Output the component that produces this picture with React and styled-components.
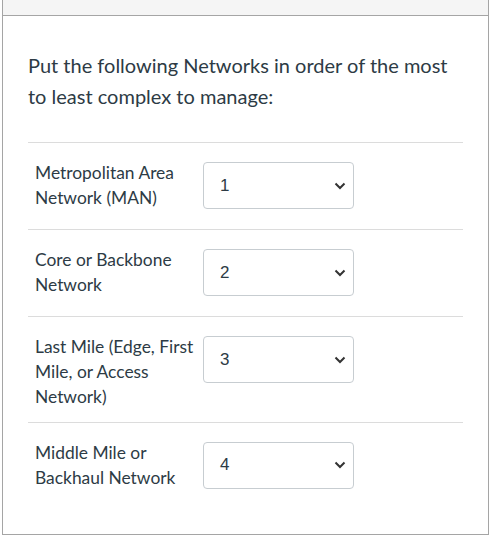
import React from "react";
import styled, { createGlobalStyle } from "styled-components";

const GlobalStyle = createGlobalStyle`
  body {
    margin: 0;
    background: #fff;
    font-family: Lato, "Liberation Sans", sans-serif;
    color: #2d3b45;
  }
`;

const items = [
  { label: "Metropolitan Area Network (MAN)", value: "1" },
  { label: "Core or Backbone Network", value: "2" },
  { label: "Last Mile (Edge, First Mile, or Access Network)", value: "3" },
  { label: "Middle Mile or Backhaul Network", value: "4" },
];

const App = () => {
  return (
    <>
      <GlobalStyle />
      <Card>
        <Header />
        <Body>
          <Question>
            Put the following Networks in order of the most to least complex
            to manage:
          </Question>
          <Answers>
            {items.map((item) => (
              <Row key={item.value}>
                <Label>{item.label}</Label>
                <Select>
                  <span>{item.value}</span>
                  <Chevron width="12" height="8" viewBox="0 0 12 8">
                    <path
                      d="M1.5 1.5 L6 6 L10.5 1.5"
                      fill="none"
                      stroke="#333"
                      strokeWidth="2"
                    />
                  </Chevron>
                </Select>
              </Row>
            ))}
          </Answers>
        </Body>
      </Card>
    </>
  );
};

const Card = styled.div`
  margin-left: 2px;
  width: 485px;
  border: 1px solid #a5a5a5;
  border-top: none;
  background: #fff;
`;

const Header = styled.div`
  height: 15px;
  background: #f5f5f5;
  border-bottom: 1px solid #a5a5a5;
`;

const Body = styled.div`
  padding: 34px 25px 25px 25px;
`;

const Question = styled.p`
  margin: 0;
  font-size: 20px;
  line-height: 31px;
`;

const Answers = styled.div`
  margin-top: 30px;
`;

const Row = styled.div`
  display: flex;
  align-items: flex-start;
  padding: 12px 0;
  border-top: 1px solid #dcdcdc;
`;

const Label = styled.div`
  width: 161px;
  margin: 5px 7px 0 7px;
  font-size: 17.4px;
  line-height: 25.2px;
`;

const Select = styled.div`
  box-sizing: border-box;
  display: flex;
  align-items: center;
  justify-content: space-between;
  width: 151px;
  height: 47px;
  margin: 7px 0 8px 0;
  padding: 0 7px 0 16px;
  border: 1px solid #c7cdd1;
  border-radius: 4px;
  font-family: "Liberation Sans", Arial, sans-serif;
  font-size: 17px;
  color: #2d3b45;
`;

const Chevron = styled.svg`
  display: block;
`;

export default App;
